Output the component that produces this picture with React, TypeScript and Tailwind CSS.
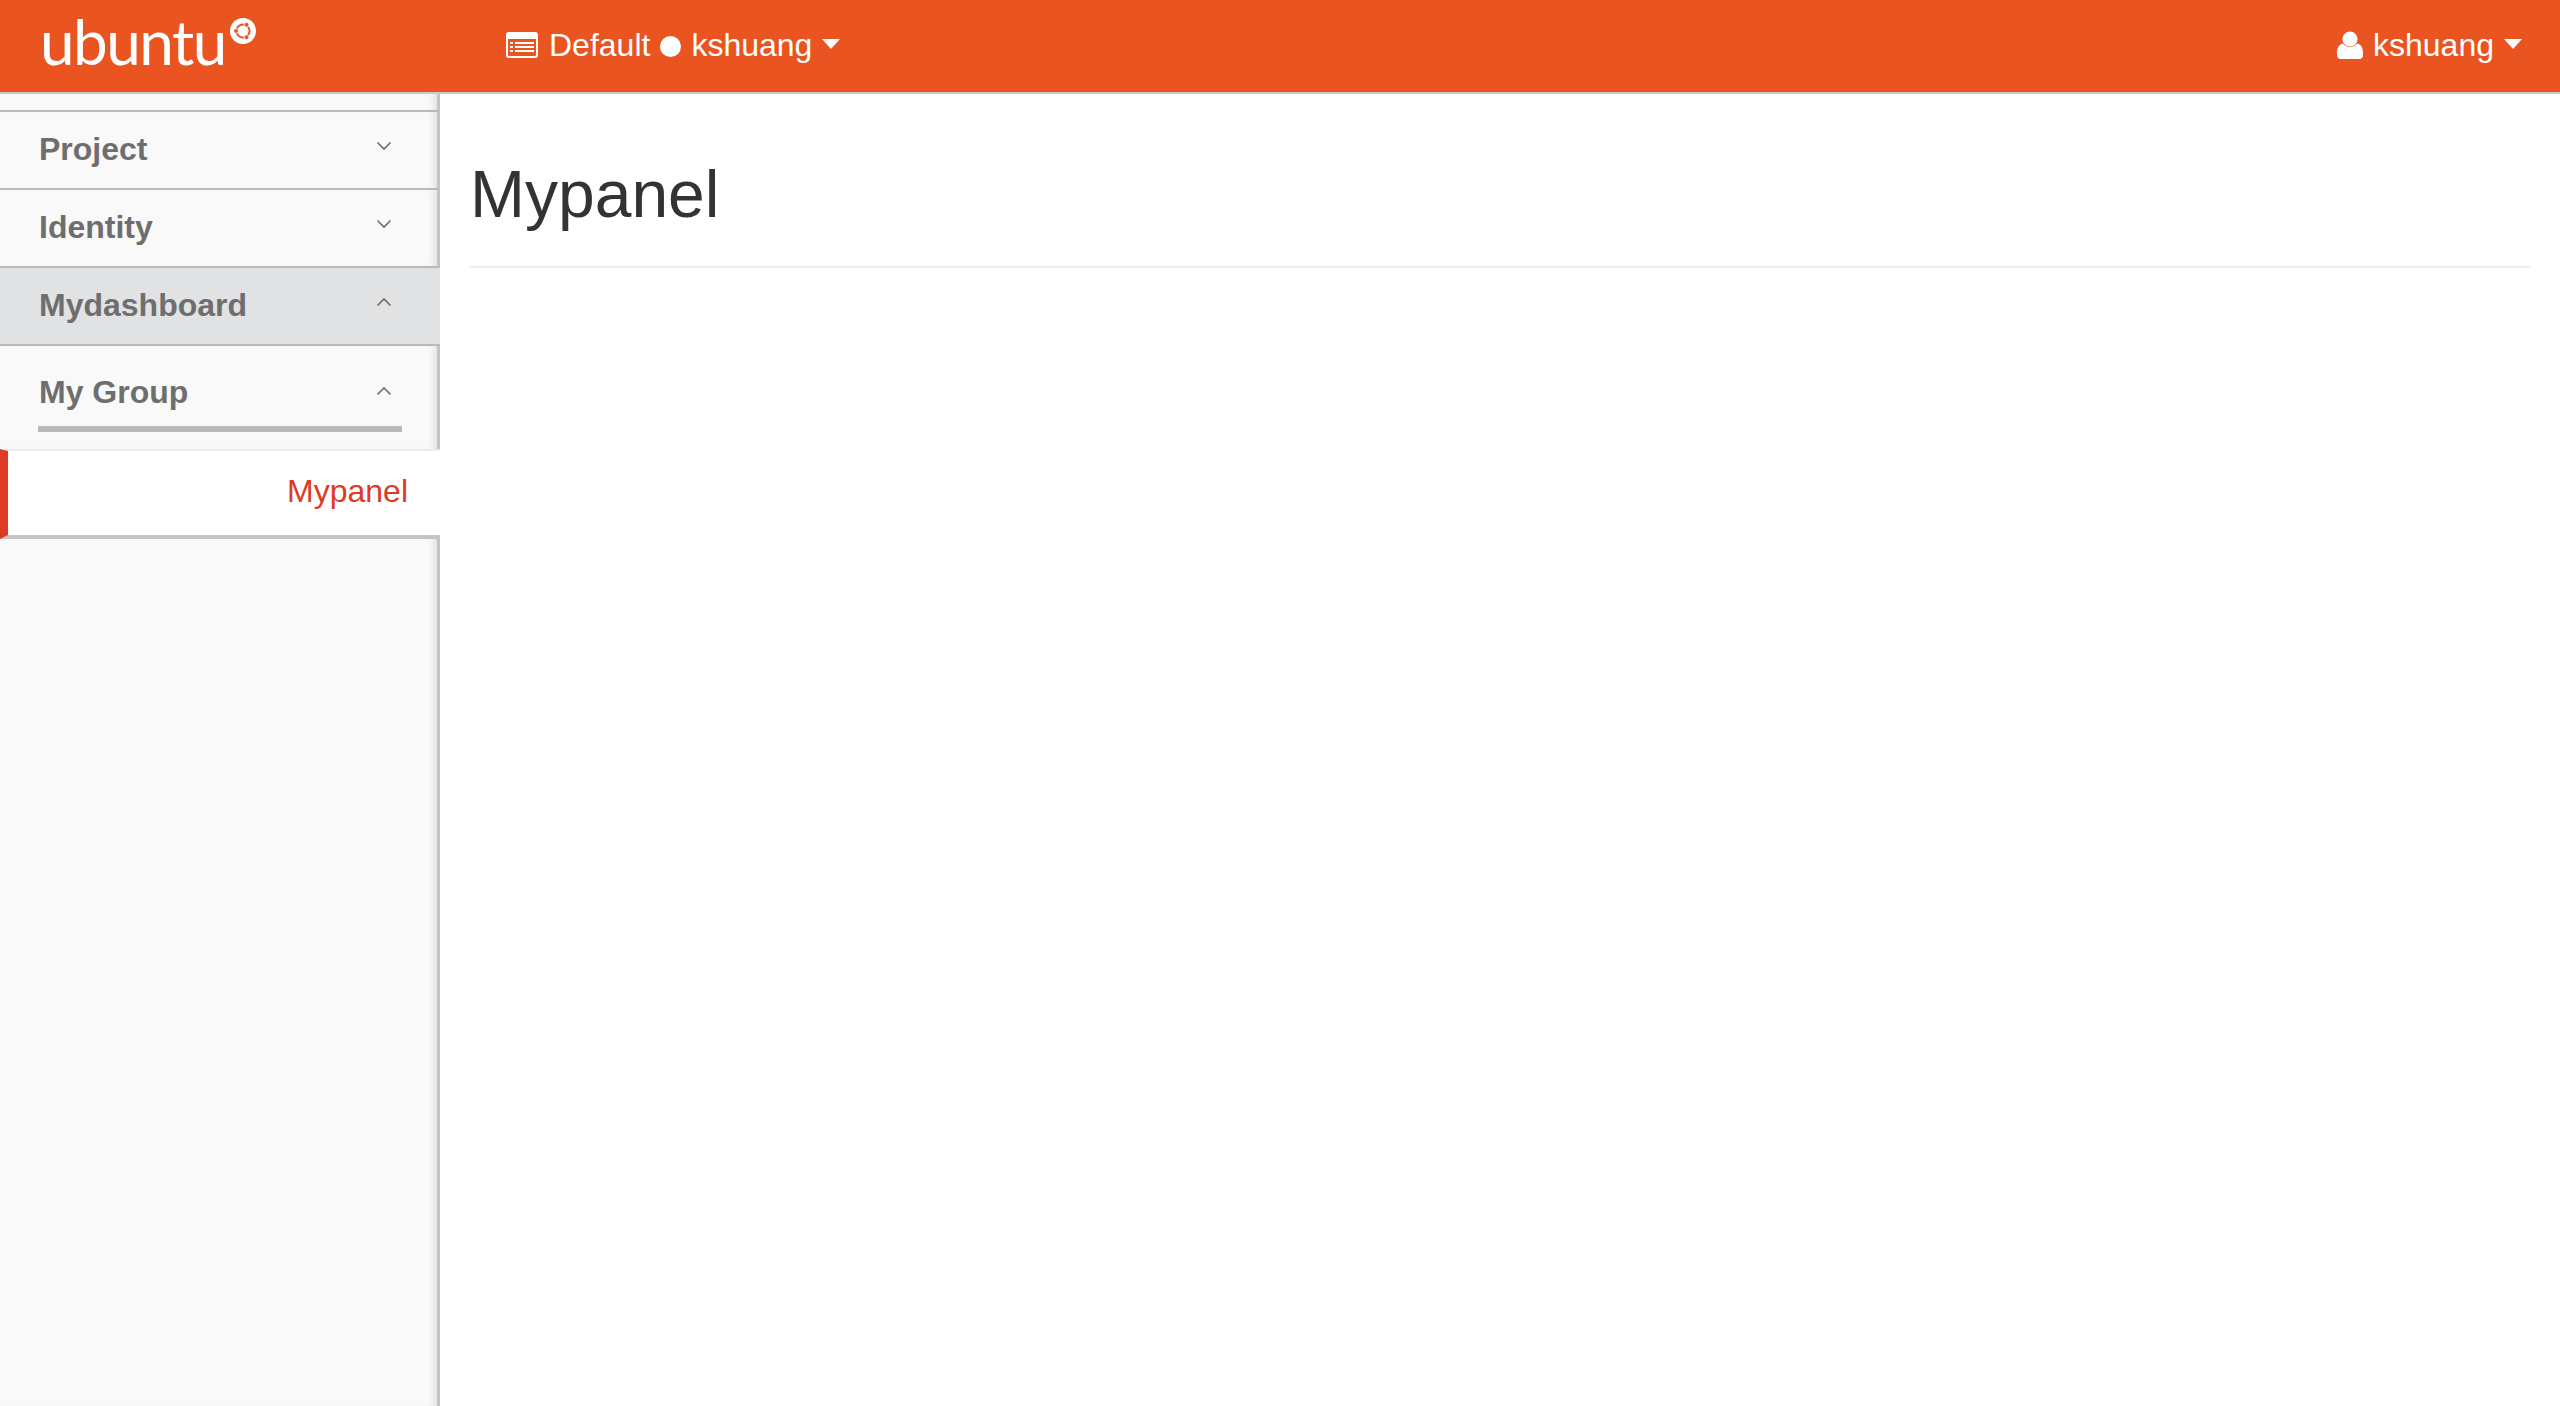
import React from 'react';

const UbuntuMark: React.FC = () => (
  <svg width="26" height="26" viewBox="0 0 26 26" className="block">
    <circle cx="13" cy="13" r="13" fill="#ffffff" />
    <circle cx="13" cy="13" r="6.6" fill="none" stroke="#e95420" strokeWidth="2" />
    <circle cx="6" cy="13" r="2.4" fill="#e95420" stroke="#ffffff" strokeWidth="0.8" />
    <circle cx="16.6" cy="6.8" r="2.4" fill="#e95420" stroke="#ffffff" strokeWidth="0.8" />
    <circle cx="16.6" cy="19.2" r="2.4" fill="#e95420" stroke="#ffffff" strokeWidth="0.8" />
  </svg>
);

const ListAlt: React.FC = () => (
  <svg width="32" height="26" viewBox="0 0 32 26" className="block">
    <path
      fillRule="evenodd"
      fill="#ffffff"
      d="M3 0h26a3 3 0 0 1 3 3v20a3 3 0 0 1-3 3H3a3 3 0 0 1-3-3V3a3 3 0 0 1 3-3zM2 7v16a1 1 0 0 0 1 1h26a1 1 0 0 0 1-1V7z"
    />
    <rect x="4" y="10" width="3" height="2" fill="#ffffff" />
    <rect x="9" y="10" width="19" height="2" fill="#ffffff" />
    <rect x="4" y="14" width="3" height="2" fill="#ffffff" />
    <rect x="9" y="14" width="19" height="2" fill="#ffffff" />
    <rect x="4" y="18" width="3" height="2" fill="#ffffff" />
    <rect x="9" y="18" width="19" height="2" fill="#ffffff" />
  </svg>
);

const UserIcon: React.FC = () => (
  <svg width="26" height="28" viewBox="0 0 26 28" className="block">
    <circle cx="13" cy="8" r="7.6" fill="#ffffff" />
    <path
      fill="#ffffff"
      d="M6 12.5c1.6 2.2 4 3.6 7 3.6s5.4-1.4 7-3.6c3.6.6 6 3.7 6 9.5v2c0 2.400-1.600 4-4 4H4c-2.400 0-4-1.600-4-4v-2c0-5.800 2.400-8.900 6-9.500z"
    />
  </svg>
);

const Caret: React.FC = () => (
  <span className="block w-0 h-0 border-x-[9px] border-x-transparent border-t-[10px] border-t-white" />
);

const Chevron: React.FC<{ up?: boolean }> = ({ up }) => (
  <svg width="16" height="10" viewBox="0 0 16 10" className="block" fill="none" stroke="#6e6e6e" strokeWidth="1.6">
    <path d={up ? 'M1.500 8.500 8 2l6.500 6.500' : 'M1.500 1.500 8 8l6.500-6.500'} />
  </svg>
);

const edge = 'border-r-[3px] border-r-[#c4c4c4] shadow-[inset_-8px_0_8px_-6px_rgba(0,0,0,0.12)]';

const MenuRow: React.FC<{ label: string; up?: boolean; active?: boolean }> = ({ label, up, active }) => (
  <div
    className={`h-[78px] border-b-2 border-b-[#b9b9b9] flex items-center justify-between pl-[39px] ${
      active ? 'bg-[#e1e2e4] pr-[48px]' : `bg-[#f9f9f9] pr-[45px] ${edge}`
    }`}
  >
    <span className="text-[32px] font-bold text-[#6e6e6e] mb-[3px]">{label}</span>
    <span className="mb-[8px]">
      <Chevron up={up} />
    </span>
  </div>
);

export default function App() {
  return (
    <div className="h-[1406px] flex flex-col bg-white font-['Liberation_Sans',Arial,sans-serif] overflow-hidden">
      <header className="h-[94px] shrink-0 bg-[#e95420] border-b-2 border-b-[#c9c9c9] flex items-center justify-between text-white text-[32px]">
        <div className="flex items-center">
          <div className="w-[506px] pl-[40px] flex items-start mb-[10px]">
            <span className="font-['Lato',sans-serif] font-normal text-[62px] leading-[76px] tracking-[-1.5px]">ubuntu</span>
            <span className="mt-[15px] ml-[4px]">
              <UbuntuMark />
            </span>
          </div>
          <div className="flex items-center">
            <span className="mb-[2px]">
              <ListAlt />
            </span>
            <span className="ml-[11px] mb-[3px]">Default</span>
            <span className="ml-[10px] w-[21px] h-[21px] rounded-full bg-white" />
            <span className="ml-[10px] mb-[3px]">kshuang</span>
            <span className="ml-[10px] mb-[4px]">
              <Caret />
            </span>
          </div>
        </div>
        <div className="flex items-center pr-[38px]">
          <span className="mb-[2px]">
            <UserIcon />
          </span>
          <span className="ml-[10px] mb-[3px]">kshuang</span>
          <span className="ml-[10px] mb-[4px]">
            <Caret />
          </span>
        </div>
      </header>
      <div className="flex flex-1 min-h-0">
        <aside className="w-[440px] shrink-0 flex flex-col bg-[#f9f9f9]">
          <div className={`h-[18px] border-b-2 border-b-[#b9b9b9] ${edge}`} />
          <MenuRow label="Project" />
          <MenuRow label="Identity" />
          <MenuRow label="Mydashboard" up active />
          <div className={`h-[103px] pl-[38px] pr-[35px] ${edge}`}>
            <div className="h-[86px] border-b-[6px] border-b-[#b9b9b9] flex items-center justify-between pl-[1px] pr-[10px] pt-[12px]">
              <span className="text-[32px] font-bold text-[#6e6e6e]">My Group</span>
              <span className="mb-[2px]">
                <Chevron up />
              </span>
            </div>
          </div>
          <div className="h-[90px] bg-white border-t-2 border-t-[#ececec] border-b-[4px] border-b-[#c4c4c4] border-l-[8px] border-l-[#dd3b24] flex items-center justify-end pr-[32px]">
            <span className="text-[32px] text-[#dd3b24] mb-[5px]">Mypanel</span>
          </div>
          <div className={`flex-1 ${edge}`} />
        </aside>
        <main className="flex-1 px-[30px]">
          <div className="h-[174px] border-b-2 border-b-[#eeeeee] flex items-end pb-[36px]">
            <h1 className="text-[66px] leading-[72px] text-[#333333]">Mypanel</h1>
          </div>
        </main>
      </div>
    </div>
  );
}
